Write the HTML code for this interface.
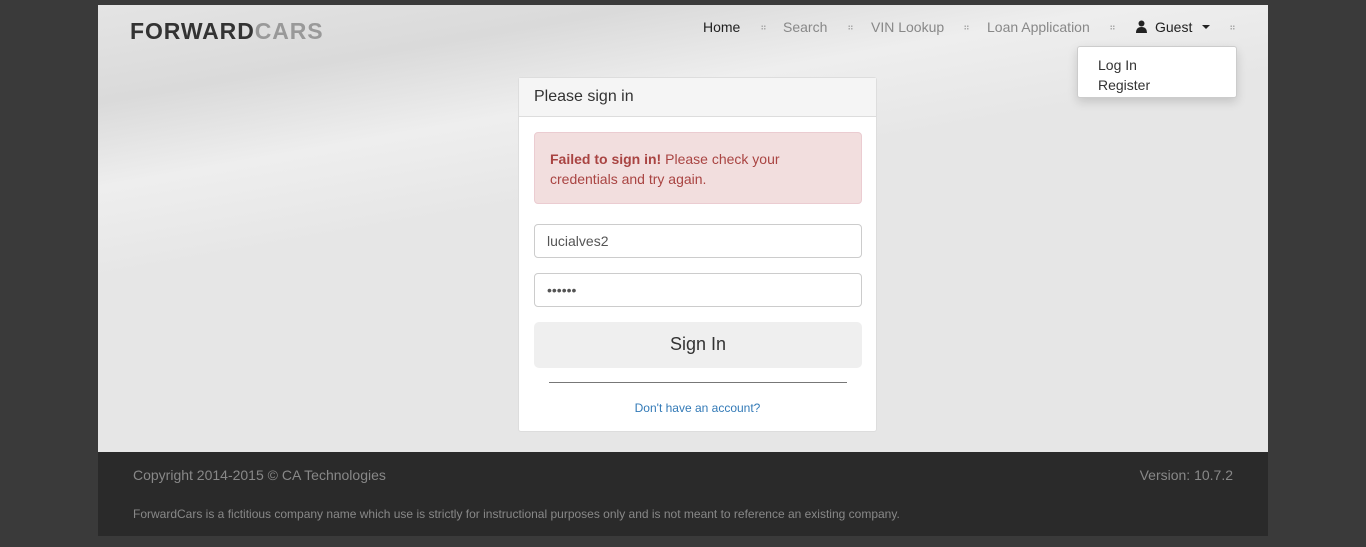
<!DOCTYPE html>
<html><head><meta charset="utf-8"><style>
*{box-sizing:border-box;margin:0;padding:0}
body{width:1366px;height:547px;background:#3a3a3a;font-family:"Liberation Sans",sans-serif;position:relative;overflow:hidden}
.main{position:absolute;left:98px;top:5px;width:1170px;height:447px;background:linear-gradient(170deg,#e4e4e4 0%,#dadada 15%,#eeeeee 28%,#e6e6e6 42%,#e6e6e6 100%)}
.logo{position:absolute;left:32px;top:13px;font-size:23px;font-weight:bold;color:#333;letter-spacing:0.9px}
.logo span{color:#999}
.nav{position:absolute;top:14px;font-size:14px;color:#888}
.dot{position:absolute;top:20px;width:5px;height:5px;background:radial-gradient(circle,#aaa 40%,transparent 50%) 0 0/2.5px 2.5px}
.dd{position:absolute;left:979px;top:41px;width:160px;height:52px;background:#fff;border:1px solid #ccc;border-radius:3px;box-shadow:0 4px 10px rgba(0,0,0,.15);font-size:14px;color:#333;padding:8px 20px;line-height:20px}
.panel{position:absolute;left:420px;top:72px;width:359px;height:355px;background:#fff;border:1px solid #ddd;border-radius:3px}
.ph{height:39px;background:#f5f5f5;border-bottom:1px solid #ddd;padding:10px 15px;font-size:16px;color:#333}
.alert{position:absolute;left:15px;top:54px;width:328px;height:72px;background:#f2dede;border:1px solid #ebccd1;border-radius:4px;color:#a94442;font-size:14px;line-height:20px;padding:16px 15px}
.inp{position:absolute;left:15px;width:328px;height:34px;border:1px solid #ccc;border-radius:4px;font-size:14px;color:#555;padding:8px 12px;background:#fff}
.btn{position:absolute;left:15px;top:244px;width:328px;height:46px;background:#efefef;border-radius:5px;text-align:center;font-size:18px;color:#333;line-height:44px}
.hr{position:absolute;left:30px;top:304px;width:298px;border-top:1px solid #777}
.lnk{position:absolute;left:0;top:323px;width:100%;text-align:center;font-size:12px;color:#337ab7}
.foot{position:absolute;left:98px;top:452px;width:1170px;height:84px;background:#2a2a2a;color:#888}
</style></head><body>
<div class="main">
<div class="logo">FORWARD<span>CARS</span></div>
<div class="nav" style="left:605px;color:#222">Home</div>
<div class="dot" style="left:663px"></div>
<div class="nav" style="left:685px">Search</div>
<div class="dot" style="left:750px"></div>
<div class="nav" style="left:773px">VIN Lookup</div>
<div class="dot" style="left:866px"></div>
<div class="nav" style="left:889px">Loan Application</div>
<div class="dot" style="left:1012px"></div>
<svg style="position:absolute;left:1038px;top:15px" width="11" height="13" viewBox="0 0 11 13"><circle cx="5.5" cy="3.5" r="3" fill="#222"/><path d="M0 13 Q0 7 5.5 7 Q11 7 11 13Z" fill="#222"/></svg>
<div class="nav" style="left:1057px;color:#222">Guest</div>
<div style="position:absolute;left:1104px;top:20px;border:4px solid transparent;border-top:4px solid #222"></div>
<div class="dot" style="left:1132px"></div>
<div class="dd">Log In<br>Register</div>
<div class="panel">
<div class="ph">Please sign in</div>
<div class="alert"><b>Failed to sign in!</b> Please check your credentials and try again.</div>
<div class="inp" style="top:146px">lucialves2</div>
<div class="inp" style="top:195px">••••••</div>
<div class="btn">Sign In</div>
<div class="hr"></div>
<div class="lnk">Don't have an account?</div>
</div>
</div>
<div class="foot">
<div style="position:absolute;left:35px;top:15px;font-size:14px">Copyright 2014-2015 © CA Technologies</div>
<div style="position:absolute;right:35px;top:15px;font-size:14px">Version: 10.7.2</div>
<div style="position:absolute;left:35px;top:55px;font-size:12px">ForwardCars is a fictitious company name which use is strictly for instructional purposes only and is not meant to reference an existing company.</div>
</div>
</body></html>
